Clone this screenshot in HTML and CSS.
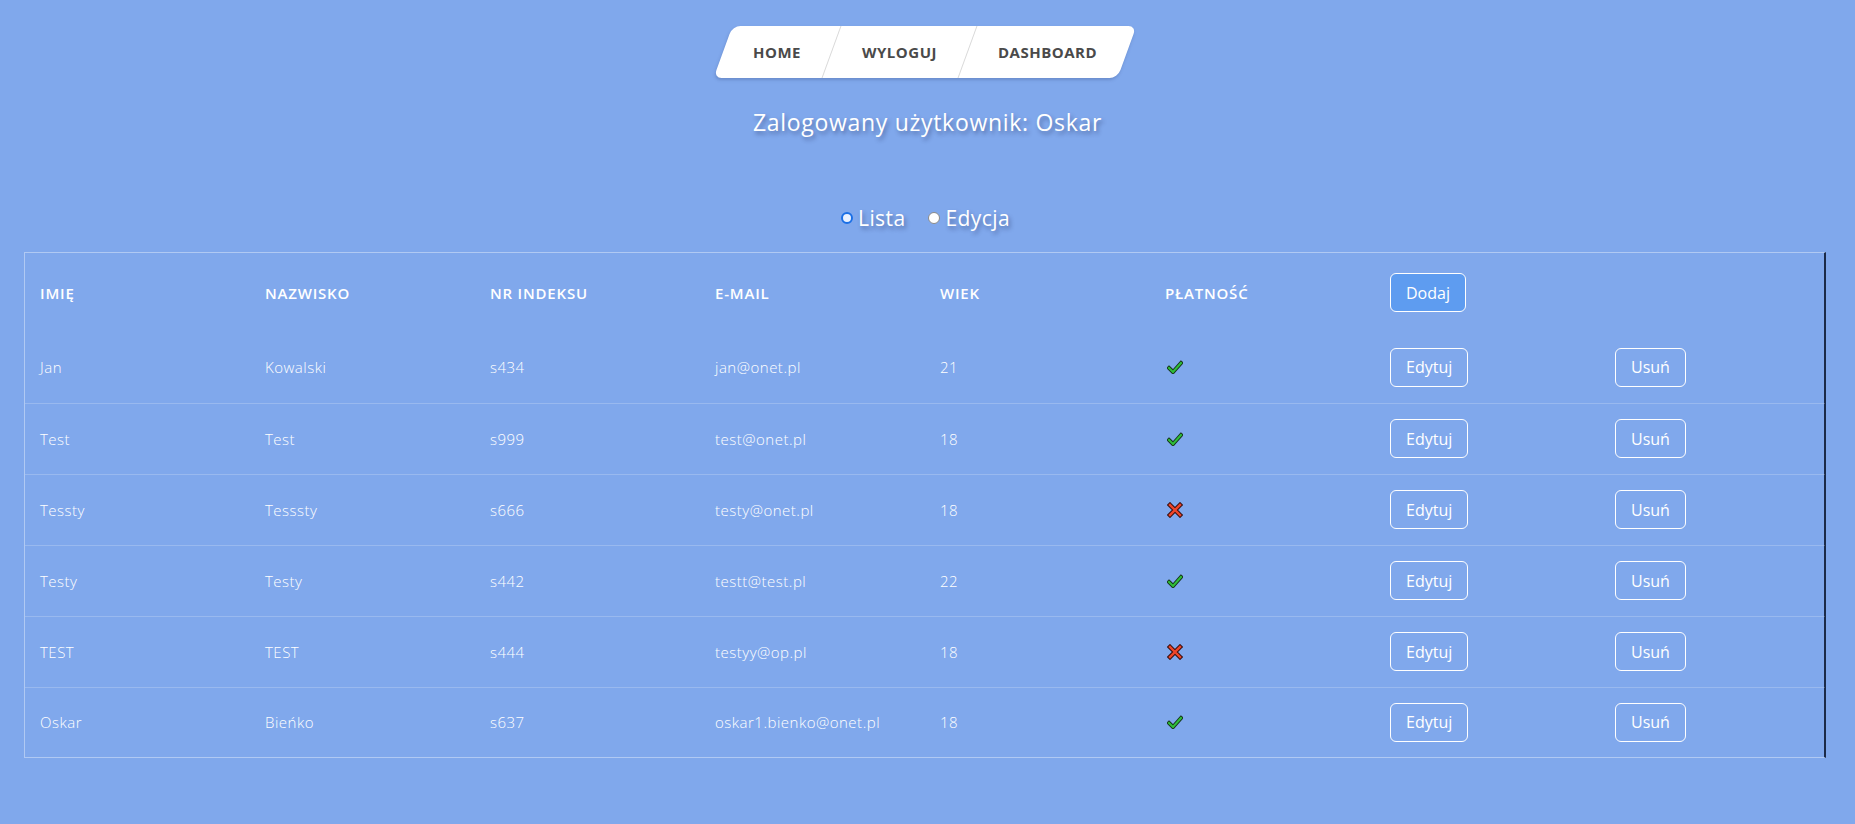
FILE: index.html
```html
<!DOCTYPE html>
<html lang="pl">
<head>
<meta charset="utf-8">
<title>Lista studentów</title>
<link rel="stylesheet" href="styles.css">
</head>
<body>
<header class="top">
  <ul class="menu">
    <li><a href="#">HOME</a></li>
    <li><a href="#">WYLOGUJ</a></li>
    <li><a href="#">DASHBOARD</a></li>
  </ul>
  <h2 class="user">Zalogowany użytkownik: Oskar</h2>
</header>

<div class="mode">
  <label class="opt"><span class="dot dot-on"></span>Lista</label>
  <label class="opt"><span class="dot"></span>Edycja</label>
</div>

<div class="panel">
  <table class="grid">
    <thead>
      <tr>
        <th>Imię</th><th>Nazwisko</th><th>Nr indeksu</th><th>E-mail</th><th>Wiek</th><th>Płatność</th>
        <th><button class="btn btn-add">Dodaj</button></th><th></th>
      </tr>
    </thead>
    <tbody>
      <tr><td>Jan</td><td>Kowalski</td><td>s434</td><td>jan@onet.pl</td><td>21</td>
        <td><svg class="ico" viewBox="0 0 16 14" width="16" height="14"><polyline points="2,8 6,12 14,3" fill="none" stroke="#16331a" stroke-width="4" stroke-linecap="square"/><polyline points="2,8 6,12 14,3" fill="none" stroke="#2fbf3a" stroke-width="2" stroke-linecap="square"/></svg></td>
        <td><button class="btn">Edytuj</button></td><td><button class="btn">Usuń</button></td></tr>
      <tr><td>Test</td><td>Test</td><td>s999</td><td>test@onet.pl</td><td>18</td>
        <td><svg class="ico" viewBox="0 0 16 14" width="16" height="14"><polyline points="2,8 6,12 14,3" fill="none" stroke="#16331a" stroke-width="4" stroke-linecap="square"/><polyline points="2,8 6,12 14,3" fill="none" stroke="#2fbf3a" stroke-width="2" stroke-linecap="square"/></svg></td>
        <td><button class="btn">Edytuj</button></td><td><button class="btn">Usuń</button></td></tr>
      <tr><td>Tessty</td><td>Tesssty</td><td>s666</td><td>testy@onet.pl</td><td>18</td>
        <td><svg class="ico" viewBox="0 0 16 16" width="16" height="16"><path d="M3,3 L13,13 M13,3 L3,13" fill="none" stroke="#3a1010" stroke-width="4.5" stroke-linecap="square"/><path d="M3,3 L13,13 M13,3 L3,13" fill="none" stroke="#f0452a" stroke-width="2.4" stroke-linecap="square"/></svg></td>
        <td><button class="btn">Edytuj</button></td><td><button class="btn">Usuń</button></td></tr>
      <tr><td>Testy</td><td>Testy</td><td>s442</td><td>testt@test.pl</td><td>22</td>
        <td><svg class="ico" viewBox="0 0 16 14" width="16" height="14"><polyline points="2,8 6,12 14,3" fill="none" stroke="#16331a" stroke-width="4" stroke-linecap="square"/><polyline points="2,8 6,12 14,3" fill="none" stroke="#2fbf3a" stroke-width="2" stroke-linecap="square"/></svg></td>
        <td><button class="btn">Edytuj</button></td><td><button class="btn">Usuń</button></td></tr>
      <tr><td>TEST</td><td>TEST</td><td>s444</td><td>testyy@op.pl</td><td>18</td>
        <td><svg class="ico" viewBox="0 0 16 16" width="16" height="16"><path d="M3,3 L13,13 M13,3 L3,13" fill="none" stroke="#3a1010" stroke-width="4.5" stroke-linecap="square"/><path d="M3,3 L13,13 M13,3 L3,13" fill="none" stroke="#f0452a" stroke-width="2.4" stroke-linecap="square"/></svg></td>
        <td><button class="btn">Edytuj</button></td><td><button class="btn">Usuń</button></td></tr>
      <tr><td>Oskar</td><td>Bieńko</td><td>s637</td><td>oskar1.bienko@onet.pl</td><td>18</td>
        <td><svg class="ico" viewBox="0 0 16 14" width="16" height="14"><polyline points="2,8 6,12 14,3" fill="none" stroke="#16331a" stroke-width="4" stroke-linecap="square"/><polyline points="2,8 6,12 14,3" fill="none" stroke="#2fbf3a" stroke-width="2" stroke-linecap="square"/></svg></td>
        <td><button class="btn">Edytuj</button></td><td><button class="btn">Usuń</button></td></tr>
    </tbody>
  </table>
</div>
</body>
</html>
```
FILE: styles.css
```css
* { box-sizing: border-box; }
html, body { margin: 0; padding: 0; }
body {
  background: #80a8ec;
  font-family: "Open Sans", "Noto Sans", sans-serif;
  color: #fff;
  min-height: 824px;
}
.top {
  display: flex;
  flex-direction: column;
  align-items: center;
  padding-top: 26px;
}
.menu {
  list-style: none;
  margin: 0 6px 0 0;
  padding: 0;
  display: flex;
  height: 52px;
  background: #fff;
  border-radius: 8px;
  transform: skewX(-20deg);
  box-shadow: 0 2px 3px rgba(40, 60, 110, 0.25);
}
.menu li + li { border-left: 1px solid #d9d9d9; }
.menu a {
  display: flex;
  align-items: center;
  height: 52px;
  padding: 0 30px;
  transform: skewX(20deg);
  color: #4a4a4a;
  text-decoration: none;
  font-weight: 700;
  font-size: 15px;
  letter-spacing: 0.5px;
}
.user {
  margin: 29px 0 0;
  font-size: 23px;
  line-height: 30px;
  font-weight: 500;
  letter-spacing: 0.7px;
  text-shadow: 2px 3px 4px rgba(30, 45, 90, 0.45);
}
.mode {
  display: flex;
  justify-content: center;
  gap: 23px;
  margin: 67px 4px 0 0;
  height: 28px;
  align-items: center;
}
.opt {
  display: flex;
  align-items: center;
  gap: 5px;
  font-size: 21px;
  font-weight: 500;
  letter-spacing: 0.4px;
  text-shadow: 2px 3px 4px rgba(30, 45, 90, 0.45);
}
.dot {
  width: 12px;
  height: 12px;
  border-radius: 50%;
  background: #fff;
  border: 1px solid #8a8a8a;
}
.dot-on {
  border: 2px solid #1a6fe6;
  background: #e9f1ff;
}
.panel {
  margin: 20px 0 0 24px;
  width: 1802px;
  border: 1px solid rgba(255, 255, 255, 0.38);
  border-right: 2px solid #1b2a48;
}
.grid {
  width: 1800px;
  border-collapse: collapse;
  table-layout: fixed;
}
.grid th, .grid td {
  width: 225px;
  padding: 0 0 0 15px;
  text-align: left;
  vertical-align: middle;
}
.grid th {
  height: 79px;
  font-size: 15px;
  font-weight: 600;
  text-transform: uppercase;
  letter-spacing: 0.8px;
}
.grid td {
  height: 71px;
  font-size: 15px;
  font-weight: 300;
  letter-spacing: 0.5px;
  border-bottom: 1px solid rgba(255, 255, 255, 0.2);
}
.grid tbody tr:last-child td { border-bottom: none; height: 70px; }
.ico { display: block; margin-left: 2px; }
.btn {
  height: 39px;
  padding: 0 15px;
  border: 1px solid #fff;
  border-radius: 6px;
  background: transparent;
  color: #fff;
  font-family: "Open Sans", "Noto Sans", sans-serif;
  font-weight: 400;
  font-size: 16px;
  display: block;
}
.btn-add { background: #5e9cf0; }
```
